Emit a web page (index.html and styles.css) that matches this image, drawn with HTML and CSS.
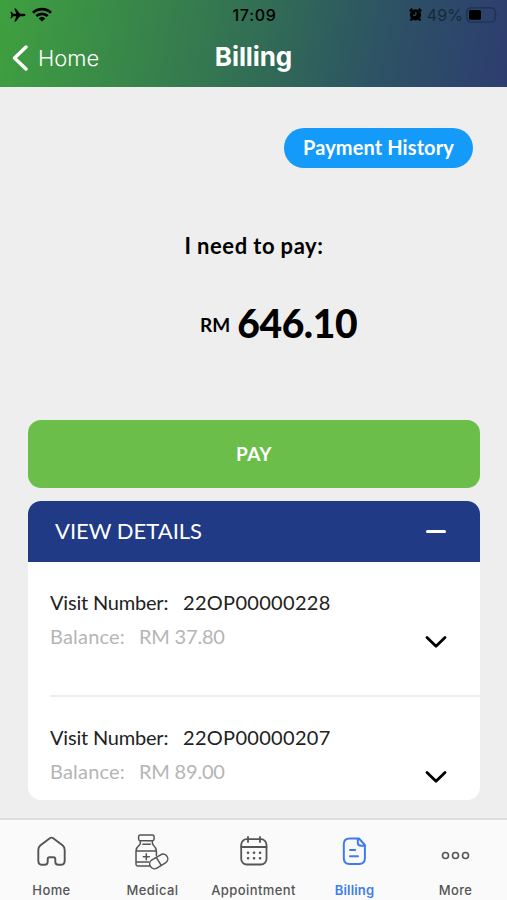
FILE: index.html
```html
<!DOCTYPE html>
<html lang="en">
<head>
<meta charset="utf-8">
<title>Billing</title>
<link rel="stylesheet" href="styles.css">
</head>
<body>
<div class="app">
  <header class="header">
    <div class="status">
      <div class="status-side">
        <svg class="plane" width="16" height="14" viewBox="0 0 16 14"><path d="M15.500 7c0-.8-.8-1.200-1.800-1.200H10L5.800.5H4.300L6.300 5.800H3.200L1.600 3.700H.5L1.300 7l-.8 3.300h1.100l1.600-2.100h3.100L4.300 13.500h1.500L10 8.200h3.700c1 0 1.800-.4 1.800-1.200z"/></svg>
        <svg class="wifi" width="20" height="15" viewBox="0 0 20 15"><g fill="none" stroke="#000" stroke-width="2.700"><path d="M1 5.800a13 13 0 0 1 18 0"/><path d="M4.300 9.100a8.300 8.300 0 0 1 11.400 0"/></g><path d="M10 14.600 6.700 11.400a4.800 4.800 0 0 1 6.600 0z"/></svg>
      </div>
      <span class="time">17:09</span>
      <div class="status-side status-right">
        <svg class="alarm" width="13" height="13" viewBox="0 0 13 13"><circle cx="6.500" cy="6.900" r="5.600"/><path d="M.8 3.300 3.300.8M12.200 3.300 9.700.8M1.500 12.500l2-2M11.500 12.500l-2-2" stroke="#000" stroke-width="2.200"/><path d="M6.900 4v3.200H4" fill="none" stroke="#2d5c61" stroke-width="1"/></svg>
        <span class="percent">49%</span>
        <svg class="battery" width="33" height="16" viewBox="0 0 33 16"><rect x=".8" y=".8" width="28.400" height="14.200" rx="4" fill="none" stroke="#1d2f50" stroke-width="1.200"/><rect x="3" y="3" width="12" height="9.800" rx="1.500"/><path d="M31 5.500q1.500 2.400 0 4.800z" fill="#1d2f50"/></svg>
      </div>
    </div>
    <div class="nav">
      <a class="back"><svg width="16" height="26" viewBox="0 0 16 26"><path d="M14 2 2.500 13 14 24" fill="none" stroke="#fff" stroke-width="3.400" stroke-linecap="round" stroke-linejoin="round"/></svg><span class="back-label">Home</span></a>
      <h1 class="title">Billing</h1>
      <span></span>
    </div>
  </header>
  <main class="main">
    <button class="history"><span class="history-label">Payment History</span></button>
    <p class="need">I need to pay:</p>
    <p class="amount"><span class="currency">RM</span><span class="total">646.10</span></p>
    <button class="pay"><span class="pay-label">PAY</span></button>
    <section class="details">
      <div class="details-head"><span>VIEW DETAILS</span><span class="minus"></span></div>
      <article class="visit">
        <p class="visit-line"><span class="visit-key">Visit Number:</span><span class="visit-id">22OP00000228</span></p>
        <p class="balance"><span class="balance-key">Balance:</span><span class="balance-value">RM 37.80</span></p>
        <svg class="chevron" width="24" height="14" viewBox="0 0 24 14"><path d="m3 2.500 9 8.800 9-8.800"/></svg>
      </article>
      <article class="visit">
        <p class="visit-line"><span class="visit-key">Visit Number:</span><span class="visit-id">22OP00000207</span></p>
        <p class="balance"><span class="balance-key">Balance:</span><span class="balance-value">RM 89.00</span></p>
        <svg class="chevron" width="24" height="14" viewBox="0 0 24 14"><path d="m3 2.500 9 8.800 9-8.800"/></svg>
      </article>
    </section>
  </main>
  <nav class="tabs">
    <a class="tab"><svg width="36" height="38" viewBox="0 0 36 38"><path stroke-width="1.900" d="M15.500 5.400 6.500 12.200Q4.300 14 4.300 17v10.500q0 4.300 4 4.300h2.400q3 0 3-3V26q0-1.800 1.800-1.800h4q1.800 0 1.800 1.800v2.800q0 3 3 3h2.400q4 0 4-4.300V17q0-3-2.200-4.800L19.500 5.400q-2-1.500-4 0z"/></svg><span>Home</span></a>
    <a class="tab"><svg width="36" height="38" viewBox="1 -1 36 38"><g stroke-width="1.500"><rect x="4.600" y="1" width="15.500" height="5.800" rx="1.700"/><path d="M6.300 7v2.200q0 1-1.500 2.500Q2 14 2 17v13.300Q2 32 3.700 32h12M18.400 7v2.200q0 1 1.500 2.500 2.500 2.300 2.500 5.300v4.500M2 17.100h20.400M2 28h13M8.800 10.200h7.500M12.300 19.700v6M9.300 22.700h6"/><rect x="15" y="22.700" width="19.500" height="9.400" rx="4.700" transform="rotate(-31 24.750 27.400)" fill="#fafafa"/><path d="m22.300 23.400 4.900 8"/></g></svg><span>Medical</span></a>
    <a class="tab"><svg width="36" height="38" viewBox="0 0 36 38"><rect x="5.200" y="6.200" width="25.300" height="25.300" rx="5.500" stroke-width="1.800"/><path d="M5.200 14h25.300M12 4v5M24 4v5" stroke-width="1.800"/><path stroke-width="2.500" stroke-dasharray=".1 5.900" d="M12 19.800h12.200M12 25.300h12.200"/></svg><span>Appointment</span></a>
    <a class="tab tab-active"><svg width="36" height="38" viewBox="0 0 36 38"><path stroke-width="2" d="M22 5.500H12.500Q6.800 5.500 6.800 11.200v14q0 5.700 5.700 5.700h9.700q5.700 0 5.700-5.700V12zM20.800 6v3.500q0 3.300 3.300 3.300h3.500M13 17h5.200M13 23.300h8"/></svg><span>Billing</span></a>
    <a class="tab"><svg width="36" height="38" viewBox="0 0 36 38"><g stroke-width="1.600"><circle cx="7.500" cy="22.500" r="3"/><circle cx="17.500" cy="22.500" r="3"/><circle cx="27.500" cy="22.500" r="3"/></g></svg><span>More</span></a>
  </nav>
</div>
</body>
</html>
```

FILE: styles.css
```css
* { box-sizing: border-box; }
body { margin: 0; background: #eee; font-family: Lato, "Liberation Sans", sans-serif; }
p, h1 { margin: 0; }
button { border: 0; padding: 0; font: inherit; color: #fff; }
.app { width: 507px; height: 900px; display: flex; flex-direction: column; overflow: hidden; }
.header { height: 87px; flex: none; background: linear-gradient(100deg, #3fa03f 0%, #37834b 30%, #316b56 53%, #2d5463 73%, #2d3d70 100%); font-family: Inter, sans-serif; }
.status { display: grid; grid-template-columns: 1fr auto 1fr; align-items: center; height: 29px; padding: 0 8px 0 10px; }
.status-side { display: flex; align-items: center; gap: 6px; }
.status-right { justify-content: flex-end; gap: 3px; }
.time { font-size: 16px; font-weight: 500; letter-spacing: .7px; }
.percent { font-size: 16px; color: #142a38; letter-spacing: .1px; margin-left: 2px; }
.nav { display: grid; grid-template-columns: 1fr auto 1fr; align-items: center; height: 57px; padding: 0 12px; color: #fff; }
.back { display: flex; align-items: center; gap: 10px; }
.back-label { font-size: 22px; font-weight: 350; }
.title { font-size: 26px; font-weight: 700; letter-spacing: -.1px; line-height: 30px; padding-bottom: 2px; }
.main { flex: 1; display: flex; flex-direction: column; padding: 41px 27px 0 28px; }
.history { align-self: flex-end; width: 189px; height: 40px; margin-right: 7px; padding-bottom: 2px; border-radius: 20px; background: #149bfa; font-size: 20px; font-weight: 700; letter-spacing: .1px; }
.need { margin-top: 64px; height: 28px; line-height: 28px; text-align: center; font-size: 22px; font-weight: 700; letter-spacing: .6px; word-spacing: -.5px; }
.amount { display: flex; align-items: center; margin: 38px 0 0 172px; height: 50px; line-height: 50px; gap: 7px; font-weight: 700; }
.currency { font-size: 19px; padding-top: 4px; }
.total { font-size: 39px; font-weight: 900; letter-spacing: -.4px; }
.pay { flex: none; margin-top: 72px; height: 68px; padding-bottom: 2px; border-radius: 13px; background: #6bbe4a; font-size: 19px; font-weight: 700; letter-spacing: .3px; }
.details { flex: none; margin-top: 13px; height: 299px; border-radius: 13px; background: #fff; overflow: hidden; }
.details-head { height: 61px; background: #213a86; color: #fff; display: flex; align-items: center; justify-content: space-between; padding: 0 34px 0 27px; font-size: 22px; line-height: 59px; }
.details-head > span:first-child { padding-bottom: 2px; }
.minus { width: 20px; height: 3px; border-radius: 2px; background: #fff; }
.visit { position: relative; height: 135px; margin-left: 22px; padding-top: 23px; border-bottom: 2px solid #eee; }
.visit:last-child { border: 0; }
.visit-line, .balance { display: flex; height: 34px; line-height: 34px; font-size: 20px; color: #222; }
.visit-key { width: 133px; letter-spacing: -.2px; }
.visit-id { letter-spacing: .3px; }
.balance { color: #b5b5b5; }
.balance-key { width: 89px; letter-spacing: .2px; }
.balance-value { letter-spacing: -.2px; }
.chevron { position: absolute; right: 32px; top: 73px; fill: none; stroke: #000; stroke-width: 2.800; stroke-linecap: round; stroke-linejoin: round; }
.tabs { height: 82px; flex: none; display: grid; grid-template-columns: repeat(5, 101px); justify-content: center; border-top: 2px solid #ddd; background: #fafafa; font-family: Inter, sans-serif; }
.tab { display: flex; flex-direction: column; align-items: center; padding-top: 13px; color: #555; font-size: 13px; font-weight: 500; letter-spacing: .4px; }
.tab svg { fill: none; stroke: #555; stroke-linecap: round; stroke-linejoin: round; }
.tab span { margin-top: 11px; line-height: 16px; }
.tab-active { color: #3d7cf0; font-weight: 600; letter-spacing: .2px; }
.tab-active svg { stroke: #3d7cf0; }
```
